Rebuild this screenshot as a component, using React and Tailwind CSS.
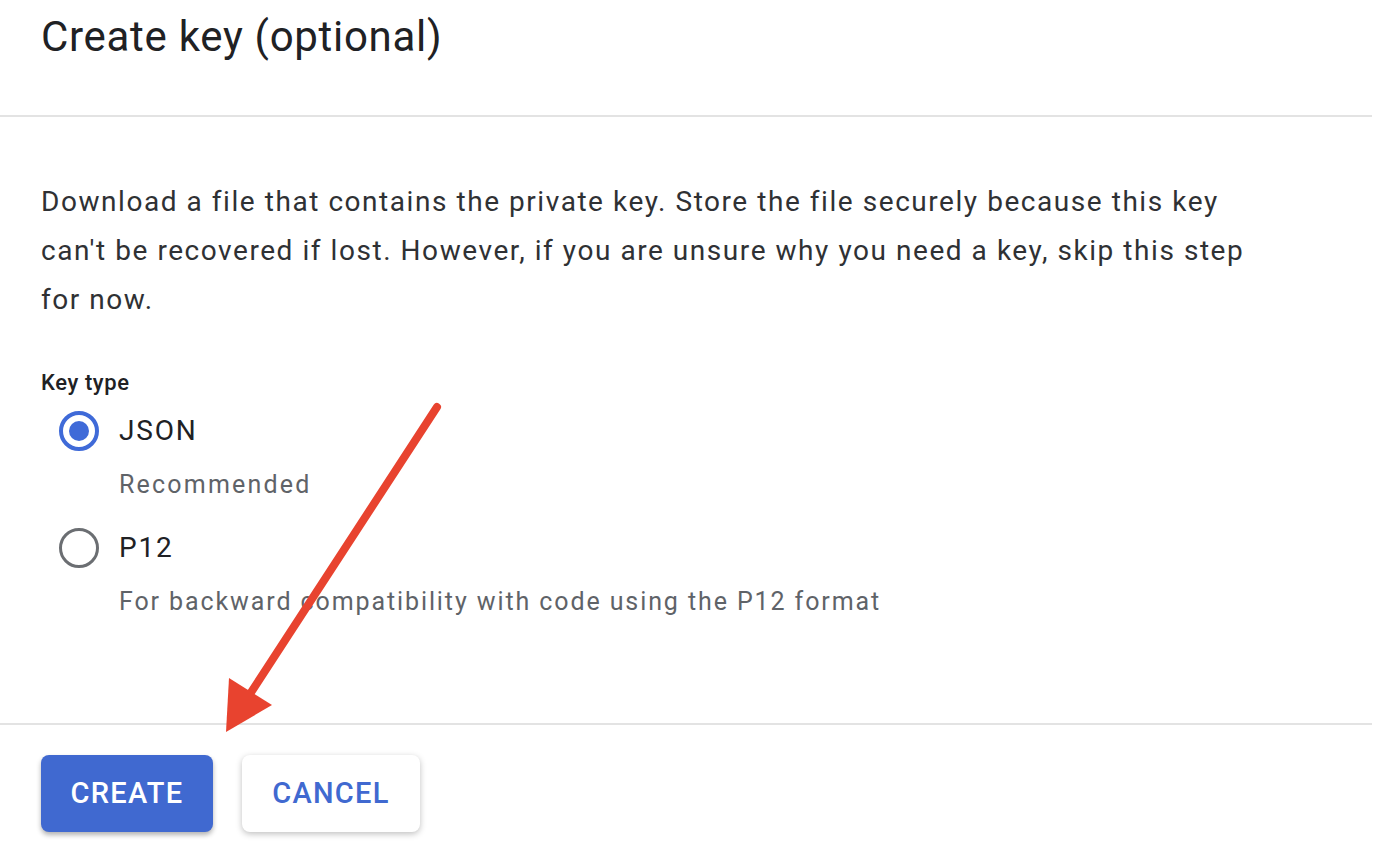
export default function App() {
  return (
    <div className="relative w-[1382px] h-[868px] bg-white text-[#202124] overflow-hidden" style={{ fontFamily: "Roboto, 'Liberation Sans', sans-serif" }}>
      <div className="w-[1372px]">
        {/* Header */}
        <div className="h-[117px] border-b-2 border-[#e3e3e3] pl-[41px] pt-[10px]">
          <h1 className="text-[42px] leading-[54px] font-normal tracking-[0.7px] text-[#202124]">Create key (optional)</h1>
        </div>

        {/* Body */}
        <div className="pl-[41px] pt-[60px] pb-[101px]">
          <p className="text-[28px] leading-[49px] tracking-[1.55px] text-[#2f3134] w-[1240px]">
            Download a file that contains the private key. Store the file securely because this key can't be recovered if lost. However, if you are unsure why you need a key, skip this step for now.
          </p>

          <div className="mt-[44px] text-[22px] leading-[30px] font-medium tracking-[0.6px] text-[#202124]">Key type</div>

          <div className="mt-[5px] flex flex-col">
            <label className="flex items-center h-[56px]">
              <span className="w-[40px] h-[40px] ml-[18px] rounded-full border-[4px] border-[#3f6ad8] flex items-center justify-center">
                <span className="w-[20px] h-[20px] rounded-full bg-[#3f6ad8]" />
              </span>
              <span className="ml-[20px] text-[28px] tracking-[1.8px] text-[#202124]">JSON</span>
            </label>
            <div className="ml-[78px] mt-[6px] text-[25px] leading-[40px] tracking-[2.2px] text-[#5f6368]">Recommended</div>

            <label className="flex items-center h-[56px] mt-[15px]">
              <span className="w-[40px] h-[40px] ml-[18px] rounded-full border-[3px] border-[#6b6e72]" />
              <span className="ml-[20px] text-[28px] tracking-[1.8px] text-[#202124]">P12</span>
            </label>
            <div className="ml-[78px] mt-[6px] text-[25px] leading-[40px] tracking-[1.9px] text-[#5f6368]">For backward compatibility with code using the P12 format</div>
          </div>
        </div>

        {/* Footer */}
        <div className="border-t-2 border-[#e3e3e3] pl-[41px] pt-[30px] flex gap-[29px]">
          <button className="h-[77px] w-[172px] rounded-[8px] bg-[#4069d0] text-white text-[29px] font-medium tracking-[1.3px] shadow-[0_3px_5px_rgba(0,0,0,0.3)]">CREATE</button>
          <button className="h-[77px] w-[178px] rounded-[8px] bg-white text-[#4069d0] text-[29px] font-medium tracking-[1.3px] shadow-[0_2px_6px_rgba(0,0,0,0.25)]">CANCEL</button>
        </div>
      </div>

      {/* Annotation arrow */}
      <svg className="absolute left-0 top-0 pointer-events-none" width="1382" height="868" viewBox="0 0 1382 868">
        <line x1="437" y1="407" x2="250" y2="694" stroke="#e8432f" strokeWidth="8" strokeLinecap="round" />
        <polygon points="226,732 229,678 272,705" fill="#e8432f" />
      </svg>
    </div>
  );
}
